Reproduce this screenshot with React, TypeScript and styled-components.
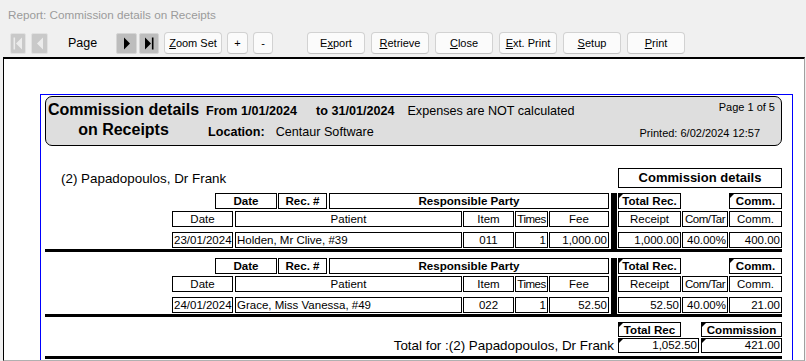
import React from "react";
import styled, { createGlobalStyle, css } from "styled-components";

// ---------- Types ----------
interface Col {
  w: number;
  ml?: number;
  align?: "left" | "center" | "right";
  tight?: boolean;
}

interface Receipt {
  date: string;
  patient: string;
  item: string;
  times: string;
  fee: string;
  receipt: string;
  comTar: string;
  comm: string;
}

// ---------- Data ----------
const receipts: Receipt[] = [
  {
    date: "23/01/2024",
    patient: "Holden, Mr Clive, #39",
    item: "011",
    times: "1",
    fee: "1,000.00",
    receipt: "1,000.00",
    comTar: "40.00%",
    comm: "400.00",
  },
  {
    date: "24/01/2024",
    patient: "Grace, Miss Vanessa, #49",
    item: "022",
    times: "1",
    fee: "52.50",
    receipt: "52.50",
    comTar: "40.00%",
    comm: "21.00",
  },
];

const topLeftCols: Col[] = [
  { w: 62 },
  { w: 49, ml: 1 },
  { w: 280, ml: 2 },
];
const detailLeftCols: Col[] = [
  { w: 61, align: "center" },
  { w: 227, ml: 2, align: "left" },
  { w: 51, ml: 1, align: "center" },
  { w: 33, ml: 1, align: "right", tight: true },
  { w: 60, ml: 1, align: "right" },
];
const detailRightCols: Col[] = [
  { w: 63, align: "right" },
  { w: 46, ml: 1, align: "right", tight: true },
  { w: 53, ml: 1, align: "right" },
];

// ---------- Styled Components ----------
const GlobalStyle = createGlobalStyle`
  html, body {
    margin: 0;
    padding: 0;
    background: #f0f0f0;
  }
  body {
    font-family: "Liberation Sans", Arial, sans-serif;
    color: #000;
  }
`;

const Window = styled.div`
  width: 806px;
  height: 361px;
  overflow: hidden;
  display: flex;
  flex-direction: column;
  background: #f0f0f0;
`;

const TitleBar = styled.div`
  height: 30px;
  line-height: 30px;
  padding-left: 8px;
  font-size: 11.7px;
  color: #9b9b9b;
  flex-shrink: 0;
`;

const Toolbar = styled.div`
  height: 27px;
  flex-shrink: 0;
  box-sizing: border-box;
  padding: 2px 0 0 10px;
  display: flex;
  align-items: flex-start;
`;

const ToolGroup = styled.div<{ $gap: number; $ml?: number }>`
  display: flex;
  gap: ${(p) => p.$gap}px;
  margin-left: ${(p) => p.$ml ?? 0}px;
`;

const NavButton = styled.div<{ $w: number; $disabled?: boolean }>`
  width: ${(p) => p.$w}px;
  height: 21px;
  margin-top: 1px;
  box-sizing: border-box;
  border: 1px solid ${(p) => (p.$disabled ? "#e2e2e2" : "#d6d6d6")};
  border-radius: 2px;
  background: ${(p) => (p.$disabled ? "#c9c9c9" : "#bdbdbd")};
  color: ${(p) => (p.$disabled ? "#ececec" : "#000")};
  display: flex;
  align-items: center;
  justify-content: center;
`;

const PageLabel = styled.div`
  margin-left: 20px;
  width: 48px;
  font-size: 12.5px;
  line-height: 22px;
`;

const ToolButton = styled.div<{ $w: number }>`
  width: ${(p) => p.$w}px;
  height: 22px;
  box-sizing: border-box;
  border: 1px solid #d2d2d2;
  border-bottom-color: #c2c2c2;
  border-radius: 4px;
  background: #fbfbfb;
  font-size: 11px;
  line-height: 20px;
  text-align: center;
  white-space: nowrap;

  u {
    text-decoration: underline;
    text-underline-offset: 1px;
  }
`;

const Preview = styled.div`
  flex: 1;
  margin: 0 1px 0 3px;
  background: #fff;
  border-top: 2px solid #000;
  border-left: 1px solid #000;
  border-right: 1px solid #a0a0a0;
  border-bottom: 1px solid #b0b0b0;
  overflow: hidden;
  padding: 35px 0 0 36px;
`;

const PageFrame = styled.div`
  width: 753px;
  min-height: 320px;
  box-sizing: border-box;
  border: 1px solid #0000ff;
  border-bottom: none;
  padding-top: 1px;
`;

const ReportBody = styled.div`
  width: 741px;
  display: flex;
  flex-direction: column;
`;

const HeaderBox = styled.div`
  margin-left: 4px;
  width: 737px;
  height: 50px;
  box-sizing: border-box;
  border: 1px solid #000;
  border-radius: 7px;
  background: #dedede;
  display: flex;
`;

const TitleBlock = styled.div`
  width: 155px;
  padding-top: 3px;
  text-align: center;
  font-size: 16px;
  font-weight: bold;
  line-height: 20px;
  white-space: nowrap;
`;

const InfoBlock = styled.div`
  margin-left: 5px;
  padding-top: 6px;
  display: flex;
  flex-direction: column;
  gap: 5px;
  font-size: 12.6px;
  line-height: 16px;
`;

const InfoRow = styled.div<{ $indent?: number }>`
  display: flex;
  padding-left: ${(p) => p.$indent ?? 0}px;
  white-space: nowrap;
`;

const InfoText = styled.span<{ $bold?: boolean; $ml?: number }>`
  font-weight: ${(p) => (p.$bold ? "bold" : "normal")};
  margin-left: ${(p) => p.$ml ?? 0}px;
`;

const StampBlock = styled.div`
  margin-left: auto;
  padding-top: 3px;
  display: flex;
  flex-direction: column;
  align-items: flex-end;
  font-size: 11px;
  line-height: 14px;
`;

const StampLine = styled.div<{ $pr: number; $mt?: number }>`
  padding-right: ${(p) => p.$pr}px;
  margin-top: ${(p) => p.$mt ?? 0}px;
  white-space: nowrap;
`;

const PartyRow = styled.div`
  margin: 22px 0 5px;
  height: 20px;
  display: flex;
  align-items: center;
`;

const PartyName = styled.div`
  margin-left: 20px;
  font-size: 13.4px;
`;

const SectionTitle = styled.div`
  margin-left: auto;
  width: 164px;
  height: 20px;
  box-sizing: border-box;
  border: 1px solid #000;
  font-size: 13px;
  font-weight: bold;
  line-height: 18px;
  text-align: center;
`;

const Band = styled.div`
  display: flex;
  margin-left: 131px;
`;

const BandPart = styled.div<{ $w: number; $ml?: number }>`
  width: ${(p) => p.$w}px;
  margin-left: ${(p) => p.$ml ?? 0}px;
  display: flex;
  flex-direction: column;
  padding-bottom: 1px;
`;

const Divider = styled.div`
  width: 6px;
  margin-left: 2px;
  background: #000;
`;

const CellRow = styled.div<{ $ml?: number; $mt?: number }>`
  display: flex;
  margin-left: ${(p) => p.$ml ?? 0}px;
  margin-top: ${(p) => p.$mt ?? 0}px;
`;

const Cell = styled.div<{
  $w: number;
  $ml?: number;
  $bold?: boolean;
  $align?: "left" | "center" | "right";
  $flag?: boolean;
  $tight?: boolean;
  $h?: number;
}>`
  width: ${(p) => p.$w}px;
  height: ${(p) => p.$h ?? 16}px;
  margin-left: ${(p) => p.$ml ?? 0}px;
  box-sizing: border-box;
  border: 1px solid #000;
  padding: 0 1px;
  font-size: ${(p) => (p.$bold ? "11.6px" : "11.5px")};
  font-weight: ${(p) => (p.$bold ? "bold" : "normal")};
  line-height: ${(p) => (p.$h ?? 16) - 2}px;
  text-align: ${(p) => p.$align ?? "center"};
  white-space: nowrap;
  overflow: hidden;

  ${(p) =>
    p.$tight &&
    css`
      padding: 0;
      letter-spacing: -0.5px;
    `}

  ${(p) =>
    p.$flag &&
    css`
      position: relative;
      &::before {
        content: "";
        position: absolute;
        left: 0;
        top: 0;
        border-top: 4px solid #000;
        border-right: 4px solid transparent;
      }
    `}
`;

const ThickLine = styled.div<{ $mb?: number }>`
  margin: 0 0 ${(p) => p.$mb ?? 0}px 4px;
  width: 737px;
  height: 3px;
  background: #000;
`;

const TotalsGrid = styled.div`
  display: grid;
  grid-template-columns: 577px 83px 81px;
  grid-template-rows: 15px 15px;
  row-gap: 1px;
  margin-bottom: 3px;
`;

const TotalLabel = styled.div`
  grid-column: 1;
  grid-row: 2;
  padding-right: 4px;
  text-align: right;
  font-size: 13.4px;
  line-height: 16px;
  white-space: nowrap;
`;

const GridSlot = styled.div<{ $col: number; $row: number }>`
  grid-column: ${(p) => p.$col};
  grid-row: ${(p) => p.$row};
`;

// ---------- Icons ----------
const NavIcon: React.FC<{ dir: "left" | "right"; bar?: boolean }> = ({
  dir,
  bar,
}) => (
  <svg width="10" height="13" viewBox="0 0 10 13" fill="currentColor">
    {dir === "left" ? (
      <>
        {bar && <rect x="0.5" y="0.5" width="1.6" height="12" />}
        <path d={bar ? "M9 0.5 L3 6.5 L9 12.5 Z" : "M8 0.5 L2 6.5 L8 12.5 Z"} />
      </>
    ) : (
      <>
        <path d={bar ? "M1 0.5 L7 6.5 L1 12.5 Z" : "M2 0.5 L8 6.5 L2 12.5 Z"} />
        {bar && <rect x="7.9" y="0.5" width="1.6" height="12" />}
      </>
    )}
  </svg>
);

// ---------- Parts ----------
const ReceiptGroup: React.FC<{ r: Receipt; mb: number }> = ({ r, mb }) => {
  const left = [r.date, r.patient, r.item, r.times, r.fee];
  const right = [r.receipt, r.comTar, r.comm];
  return (
    <>
      <Band>
        <BandPart $w={437}>
          <CellRow $ml={43}>
            {["Date", "Rec. #", "Responsible Party"].map((t, i) => (
              <Cell key={t} $w={topLeftCols[i].w} $ml={topLeftCols[i].ml} $bold>
                {t}
              </Cell>
            ))}
          </CellRow>
          <CellRow $mt={2}>
            {["Date", "Patient", "Item", "Times", "Fee"].map((t, i) => (
              <Cell
                key={t}
                $w={detailLeftCols[i].w}
                $ml={detailLeftCols[i].ml}
                $tight={detailLeftCols[i].tight}
              >
                {t}
              </Cell>
            ))}
          </CellRow>
          <CellRow $mt={5}>
            {left.map((t, i) => (
              <Cell
                key={i}
                $w={detailLeftCols[i].w}
                $ml={detailLeftCols[i].ml}
                $align={detailLeftCols[i].align}
              >
                {t}
              </Cell>
            ))}
          </CellRow>
        </BandPart>
        <Divider />
        <BandPart $w={164} $ml={1}>
          <CellRow>
            <Cell $w={63} $bold $flag>
              Total Rec.
            </Cell>
            <Cell $w={53} $ml={48} $bold $flag>
              Comm.
            </Cell>
          </CellRow>
          <CellRow $mt={2}>
            {["Receipt", "Com/Tar", "Comm."].map((t, i) => (
              <Cell
                key={t}
                $w={detailRightCols[i].w}
                $ml={detailRightCols[i].ml}
                $tight={detailRightCols[i].tight}
              >
                {t}
              </Cell>
            ))}
          </CellRow>
          <CellRow $mt={5}>
            {right.map((t, i) => (
              <Cell
                key={i}
                $w={detailRightCols[i].w}
                $ml={detailRightCols[i].ml}
                $align={detailRightCols[i].align}
              >
                {t}
              </Cell>
            ))}
          </CellRow>
        </BandPart>
      </Band>
      <ThickLine $mb={mb} />
    </>
  );
};

// ---------- Component ----------
const App: React.FC = () => {
  return (
    <Window>
      <GlobalStyle />
      <TitleBar>Report: Commission details on Receipts</TitleBar>
      <Toolbar>
        <ToolGroup $gap={5}>
          <NavButton $w={16} $disabled>
            <NavIcon dir="left" bar />
          </NavButton>
          <NavButton $w={17} $disabled>
            <NavIcon dir="left" />
          </NavButton>
        </ToolGroup>
        <PageLabel>Page</PageLabel>
        <ToolGroup $gap={2}>
          <NavButton $w={21}>
            <NavIcon dir="right" />
          </NavButton>
          <NavButton $w={20}>
            <NavIcon dir="right" bar />
          </NavButton>
        </ToolGroup>
        <ToolGroup $gap={5} $ml={5}>
          <ToolButton $w={58}>
            <u>Z</u>oom Set
          </ToolButton>
          <ToolButton $w={21}>+</ToolButton>
          <ToolButton $w={20}>-</ToolButton>
        </ToolGroup>
        <ToolGroup $gap={6} $ml={34}>
          <ToolButton $w={58}>
            E<u>x</u>port
          </ToolButton>
          <ToolButton $w={58}>
            <u>R</u>etrieve
          </ToolButton>
          <ToolButton $w={58}>
            <u>C</u>lose
          </ToolButton>
          <ToolButton $w={58}>
            <u>E</u>xt. Print
          </ToolButton>
          <ToolButton $w={58}>
            <u>S</u>etup
          </ToolButton>
          <ToolButton $w={58}>
            <u>P</u>rint
          </ToolButton>
        </ToolGroup>
      </Toolbar>

      <Preview>
        <PageFrame>
          <ReportBody>
            <HeaderBox>
              <TitleBlock>
                Commission details
                <br />
                on Receipts
              </TitleBlock>
              <InfoBlock>
                <InfoRow>
                  <InfoText $bold>From 1/01/2024</InfoText>
                  <InfoText $bold $ml={19}>
                    to 31/01/2024
                  </InfoText>
                  <InfoText $ml={13}>Expenses are NOT calculated</InfoText>
                </InfoRow>
                <InfoRow $indent={2}>
                  <InfoText $bold>Location:</InfoText>
                  <InfoText $ml={11}>Centaur Software</InfoText>
                </InfoRow>
              </InfoBlock>
              <StampBlock>
                <StampLine $pr={6}>Page 1 of 5</StampLine>
                <StampLine $pr={21} $mt={12}>
                  Printed: 6/02/2024 12:57
                </StampLine>
              </StampBlock>
            </HeaderBox>

            <PartyRow>
              <PartyName>(2) Papadopoulos, Dr Frank</PartyName>
              <SectionTitle>Commission details</SectionTitle>
            </PartyRow>

            {receipts.map((r, i) => (
              <ReceiptGroup key={i} r={r} mb={i === receipts.length - 1 ? 5 : 6} />
            ))}

            <TotalsGrid>
              <GridSlot $col={2} $row={1}>
                <Cell $w={63} $h={15} $bold $flag>
                  Total Rec
                </Cell>
              </GridSlot>
              <GridSlot $col={3} $row={1}>
                <Cell $w={81} $h={15} $bold $flag>
                  Commission
                </Cell>
              </GridSlot>
              <TotalLabel>Total for :(2) Papadopoulos, Dr Frank</TotalLabel>
              <GridSlot $col={2} $row={2}>
                <Cell $w={81} $h={15} $align="right" $flag>
                  1,052.50
                </Cell>
              </GridSlot>
              <GridSlot $col={3} $row={2}>
                <Cell $w={81} $h={15} $align="right" $flag>
                  421.00
                </Cell>
              </GridSlot>
            </TotalsGrid>
            <ThickLine />
          </ReportBody>
        </PageFrame>
      </Preview>
    </Window>
  );
};

export default App;
